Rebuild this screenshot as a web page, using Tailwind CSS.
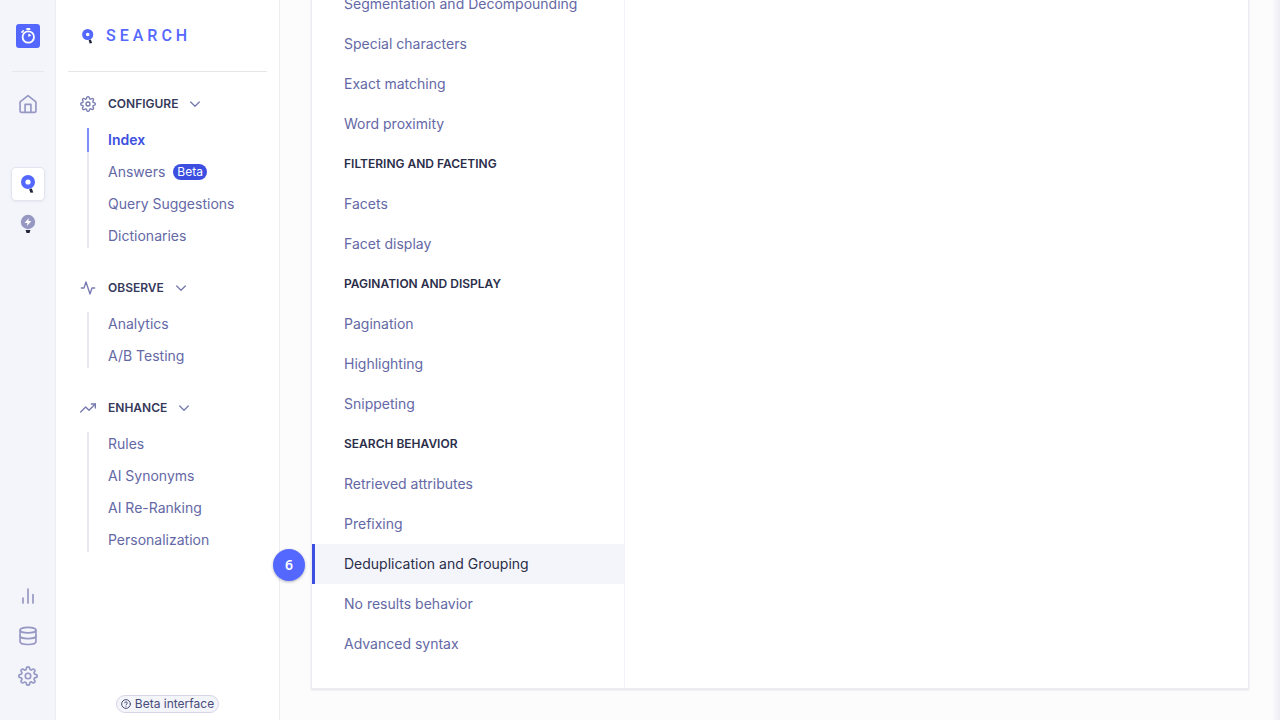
<!DOCTYPE html>
<html lang="en">
<head>
  <meta charset="UTF-8" />
  <meta name="viewport" content="width=device-width, initial-scale=1.0" />
  <title>Search - Index configuration</title>
  <script src="https://cdn.jsdelivr.net/npm/@tailwindcss/browser@4"></script>
</head>
<body class="flex h-screen overflow-hidden bg-[#fcfcfd] font-['Inter',sans-serif] text-sm text-[#6468a6]">

  <!-- Product rail -->
  <nav aria-label="Products" class="flex w-14 shrink-0 flex-col items-center border-r border-[#ececf3] bg-[#f4f5fb] pb-7 text-[#9698c3]">
    <div class="flex h-18 w-8 items-center justify-center border-b border-[#e6e6ec]">
      <a href="#" aria-label="Dashboard">
        <svg class="size-6" viewBox="0 0 24 24" fill="none">
          <rect width="24" height="24" rx="3" fill="#5468ff" />
          <circle cx="12.3" cy="13" r="5.700" stroke="#fff" stroke-width="1.800" />
          <path d="M12.300 9.800v3.300l2.900-1.600a3.300 3.300 0 0 0-2.900-1.700z" fill="#fff" />
          <path d="M10.300 5.900V4.800c0-.4.3-.7.7-.7h2.600c.4 0 .7.3.7.7v1.100z" fill="#fff" />
          <path d="M6 8.100l1.300-1.300" stroke="#fff" stroke-width="1.600" stroke-linecap="round" />
        </svg>
      </a>
    </div>

    <a href="#" aria-label="Home" class="mt-4 flex size-8 items-center justify-center">
      <svg class="size-5" viewBox="0 0 24 24" fill="none" stroke="currentColor" stroke-width="2" stroke-linecap="round" stroke-linejoin="round">
        <path d="M2.500 9.500L12 2l9.500 7.500V20a2 2 0 0 1-2 2h-15a2 2 0 0 1-2-2z" />
        <path d="M8.500 22v-9.500h7V22" />
      </svg>
    </a>

    <a href="#" aria-label="Search" class="mt-12 flex size-8 items-center justify-center rounded-sm bg-white shadow-[0_0_0_1px_#e4e4ee,0_1px_3px_#d6d6e7]">
      <svg class="size-5" viewBox="0 0 20 20" fill="none">
        <circle cx="10" cy="8" r="4.800" stroke="#5468ff" stroke-width="4.400" />
        <path d="M11.200 15.200l2.600-.8 1.500 4-2.900.4z" fill="#23263b" />
      </svg>
    </a>
    <a href="#" aria-label="Recommend" class="mt-2 flex size-8 items-center justify-center">
      <svg class="size-5" viewBox="0 0 20 20">
        <circle cx="10" cy="8" r="7.200" fill="#9698c3" />
        <path d="M10.800 4L6.500 8.900h2.900L9 12l4.400-4.900h-3z" fill="#fff" />
        <path d="M7.600 16h4.800l-.9 3h-3z" fill="#23263b" />
      </svg>
    </a>

    <a href="#" aria-label="Usage" class="mt-auto flex size-8 items-center justify-center">
      <svg class="size-5" viewBox="0 0 20 20" fill="none" stroke="currentColor" stroke-width="1.700" stroke-linecap="round">
        <path d="M5 17v-5M10 17V3M15 17V8.500" />
      </svg>
    </a>
    <a href="#" aria-label="Data sources" class="mt-2 flex size-8 items-center justify-center">
      <svg class="size-5" viewBox="0 0 24 24" fill="none" stroke="currentColor" stroke-width="2" stroke-linecap="round" stroke-linejoin="round">
        <ellipse cx="12" cy="5" rx="9.500" ry="3.300" />
        <path d="M21.500 12c0 1.800-4.200 3.200-9.500 3.200S2.500 13.800 2.500 12" />
        <path d="M2.500 5v14c0 1.800 4.200 3.200 9.500 3.200s9.500-1.400 9.500-3.200V5" />
      </svg>
    </a>
    <a href="#" aria-label="Settings" class="mt-2 flex size-8 items-center justify-center">
      <svg class="size-5" viewBox="0 0 24 24" fill="none" stroke="currentColor" stroke-width="2" stroke-linecap="round" stroke-linejoin="round">
        <circle cx="12" cy="12" r="3.300" />
        <path d="M19.400 15a1.650 1.650 0 0 0 .33 1.820l.06.06a2 2 0 0 1 0 2.830 2 2 0 0 1-2.830 0l-.06-.06a1.650 1.650 0 0 0-1.820-.33 1.650 1.650 0 0 0-1 1.510V21a2 2 0 0 1-4 0v-.09A1.650 1.650 0 0 0 9 19.400a1.650 1.650 0 0 0-1.820.33l-.06.06a2 2 0 0 1-2.830 0 2 2 0 0 1 0-2.830l.06-.06a1.650 1.650 0 0 0 .33-1.820 1.650 1.650 0 0 0-1.510-1H3a2 2 0 0 1 0-4h.09A1.650 1.650 0 0 0 4.600 9a1.650 1.650 0 0 0-.33-1.820l-.06-.06a2 2 0 0 1 0-2.830 2 2 0 0 1 2.830 0l.06.06a1.650 1.650 0 0 0 1.820.33H9a1.650 1.650 0 0 0 1-1.510V3a2 2 0 0 1 4 0v.09a1.650 1.650 0 0 0 1 1.510 1.650 1.650 0 0 0 1.820-.33l.06-.06a2 2 0 0 1 2.830 0 2 2 0 0 1 0 2.830l-.06.06a1.650 1.650 0 0 0-.33 1.820V9a1.650 1.650 0 0 0 1.510 1H21a2 2 0 0 1 0 4h-.09a1.650 1.650 0 0 0-1.510 1z" />
      </svg>
    </a>
  </nav>

  <!-- Search sidebar -->
  <aside class="flex w-56 shrink-0 flex-col border-r border-[#ececf1] bg-white px-3">
    <div class="flex h-18 shrink-0 items-center gap-2.5 border-b border-[#e6e6ea] pl-3">
      <svg class="size-4" viewBox="0 0 16 16" fill="none">
        <circle cx="7.700" cy="6.500" r="3.700" stroke="#5468ff" stroke-width="3.800" />
        <path d="M8.600 12.200l2.200-.7 1.300 3.600-2.400.4z" fill="#23263b" />
      </svg>
      <span class="font-['Roboto',sans-serif] text-base font-medium tracking-[0.25em] text-[#5468ff]">SEARCH</span>
    </div>

    <div class="flex flex-col gap-6 pt-4 pl-3">
      <section>
        <button class="flex h-8 items-center gap-3 text-xs font-semibold text-[#36395a]">
          <svg class="size-4 text-[#777aaf]" viewBox="0 0 24 24" fill="none" stroke="currentColor" stroke-width="2" stroke-linecap="round" stroke-linejoin="round">
            <circle cx="12" cy="12" r="3" />
            <path d="M19.400 15a1.650 1.650 0 0 0 .33 1.820l.06.06a2 2 0 0 1 0 2.830 2 2 0 0 1-2.830 0l-.06-.06a1.650 1.650 0 0 0-1.820-.33 1.650 1.650 0 0 0-1 1.510V21a2 2 0 0 1-4 0v-.09A1.650 1.650 0 0 0 9 19.400a1.650 1.650 0 0 0-1.820.33l-.06.06a2 2 0 0 1-2.830 0 2 2 0 0 1 0-2.830l.06-.06a1.650 1.650 0 0 0 .33-1.820 1.650 1.650 0 0 0-1.510-1H3a2 2 0 0 1 0-4h.09A1.650 1.650 0 0 0 4.600 9a1.650 1.650 0 0 0-.33-1.820l-.06-.06a2 2 0 0 1 0-2.830 2 2 0 0 1 2.830 0l.06.06a1.650 1.650 0 0 0 1.820.33H9a1.650 1.650 0 0 0 1-1.510V3a2 2 0 0 1 4 0v.09a1.650 1.650 0 0 0 1 1.510 1.650 1.650 0 0 0 1.820-.33l.06-.06a2 2 0 0 1 2.830 0 2 2 0 0 1 0 2.830l-.06.06a1.650 1.650 0 0 0-.33 1.820V9a1.650 1.650 0 0 0 1.510 1H21a2 2 0 0 1 0 4h-.09a1.650 1.650 0 0 0-1.510 1z" />
          </svg>
          CONFIGURE
          <svg class="h-4 w-2.5 text-[#777aaf]" viewBox="0 0 10 16" fill="none" stroke="currentColor" stroke-width="1.300" stroke-linecap="round" stroke-linejoin="round"><path d="M.7 6L5 10.200 9.300 6" /></svg>
        </button>
        <ul class="mt-2 ml-[7px] flex flex-col gap-2 border-l-2 border-[#e8e8f1] leading-6">
          <li><a href="#" class="-ml-0.5 block border-l-2 border-[#7f8cfb] pl-[19px] font-semibold text-[#3c4fe0]">Index</a></li>
          <li class="flex items-center gap-2 pl-[19px]">
            <a href="#">Answers</a>
            <span class="rounded-full bg-[#3c4fe0] px-1 text-xs text-white">Beta</span>
          </li>
          <li><a href="#" class="block pl-[19px]">Query Suggestions</a></li>
          <li><a href="#" class="block pl-[19px]">Dictionaries</a></li>
        </ul>
      </section>

      <section>
        <button class="flex h-8 items-center gap-3 text-xs font-semibold text-[#36395a]">
          <svg class="size-4 text-[#777aaf]" viewBox="0 0 24 24" fill="none" stroke="currentColor" stroke-width="2" stroke-linecap="round" stroke-linejoin="round"><path d="M22 12h-4l-3 9L9 3l-3 9H2" /></svg>
          OBSERVE
          <svg class="h-4 w-2.5 text-[#777aaf]" viewBox="0 0 10 16" fill="none" stroke="currentColor" stroke-width="1.300" stroke-linecap="round" stroke-linejoin="round"><path d="M.7 6L5 10.200 9.300 6" /></svg>
        </button>
        <ul class="mt-2 ml-[7px] flex flex-col gap-2 border-l-2 border-[#e8e8f1] leading-6">
          <li><a href="#" class="block pl-[19px]">Analytics</a></li>
          <li><a href="#" class="block pl-[19px]">A/B Testing</a></li>
        </ul>
      </section>

      <section>
        <button class="flex h-8 items-center gap-3 text-xs font-semibold text-[#36395a]">
          <svg class="size-4 text-[#777aaf]" viewBox="0 0 24 24" fill="none" stroke="currentColor" stroke-width="2" stroke-linecap="round" stroke-linejoin="round"><path d="M23 6l-9.500 9.500-5-5L1 18" /><path d="M17 6h6v6" /></svg>
          ENHANCE
          <svg class="h-4 w-2.5 text-[#777aaf]" viewBox="0 0 10 16" fill="none" stroke="currentColor" stroke-width="1.300" stroke-linecap="round" stroke-linejoin="round"><path d="M.7 6L5 10.200 9.300 6" /></svg>
        </button>
        <ul class="mt-2 ml-[7px] flex flex-col gap-2 border-l-2 border-[#e8e8f1] leading-6">
          <li><a href="#" class="block pl-[19px]">Rules</a></li>
          <li><a href="#" class="block pl-[19px]">AI Synonyms</a></li>
          <li><a href="#" class="block pl-[19px]">AI Re-Ranking</a></li>
          <li><a href="#" class="block pl-[19px]">Personalization</a></li>
        </ul>
      </section>
    </div>

    <button class="mt-auto mb-[7px] flex items-center gap-1 self-center rounded-full border border-[#d6d6e7] bg-[#f4f5fb] px-1 text-xs text-[#484c7a]">
      <svg class="size-2.5" viewBox="0 0 24 24" fill="none" stroke="currentColor" stroke-width="2.400" stroke-linecap="round" stroke-linejoin="round">
        <circle cx="12" cy="12" r="10.500" />
        <path d="M9 9a3 3 0 0 1 5.900 1c0 2-2.900 2.500-2.900 4M12 17.500v.1" />
      </svg>
      Beta interface
    </button>
  </aside>

  <!-- Settings, scrolled to the end -->
  <main class="flex flex-1 flex-col justify-end bg-[linear-gradient(to_left,#ededf5,#fcfcfd_8px)] px-8 pb-8">
    <div class="flex shrink-0 bg-white shadow-[0_0_0_1px_#ececf3,0_1px_2px_1px_#e0e0ea]">
      <ul class="w-[313px] shrink-0 border-r border-[#f2f2f8] pb-6 leading-10">
        <li><a href="#" class="block px-8">Segmentation and Decompounding</a></li>
        <li><a href="#" class="block px-8">Special characters</a></li>
        <li><a href="#" class="block px-8">Exact matching</a></li>
        <li><a href="#" class="block px-8">Word proximity</a></li>
        <li class="px-8 text-xs leading-10 font-semibold text-[#2b2e4a]">FILTERING AND FACETING</li>
        <li><a href="#" class="block px-8">Facets</a></li>
        <li><a href="#" class="block px-8">Facet display</a></li>
        <li class="px-8 text-xs leading-10 font-semibold text-[#2b2e4a]">PAGINATION AND DISPLAY</li>
        <li><a href="#" class="block px-8">Pagination</a></li>
        <li><a href="#" class="block px-8">Highlighting</a></li>
        <li><a href="#" class="block px-8">Snippeting</a></li>
        <li class="px-8 text-xs leading-10 font-semibold text-[#2b2e4a]">SEARCH BEHAVIOR</li>
        <li><a href="#" class="block px-8">Retrieved attributes</a></li>
        <li><a href="#" class="block px-8">Prefixing</a></li>
        <li class="relative">
          <a href="#" class="block border-l-3 border-[#3c4fe0] bg-[#f4f5fb] pr-8 pl-[29px] text-[#2b2e4a]">Deduplication and Grouping</a>
          <!-- Step marker -->
          <span class="absolute top-[5px] -left-[39px] flex size-8 items-center justify-center rounded-full bg-[#5468ff] font-['Noto_Sans',sans-serif] text-sm font-semibold text-white shadow-[0_1px_3px_#23263b55]">6</span>
        </li>
        <li><a href="#" class="block px-8">No results behavior</a></li>
        <li><a href="#" class="block px-8">Advanced syntax</a></li>
      </ul>
    </div>
  </main>

</body>
</html>
